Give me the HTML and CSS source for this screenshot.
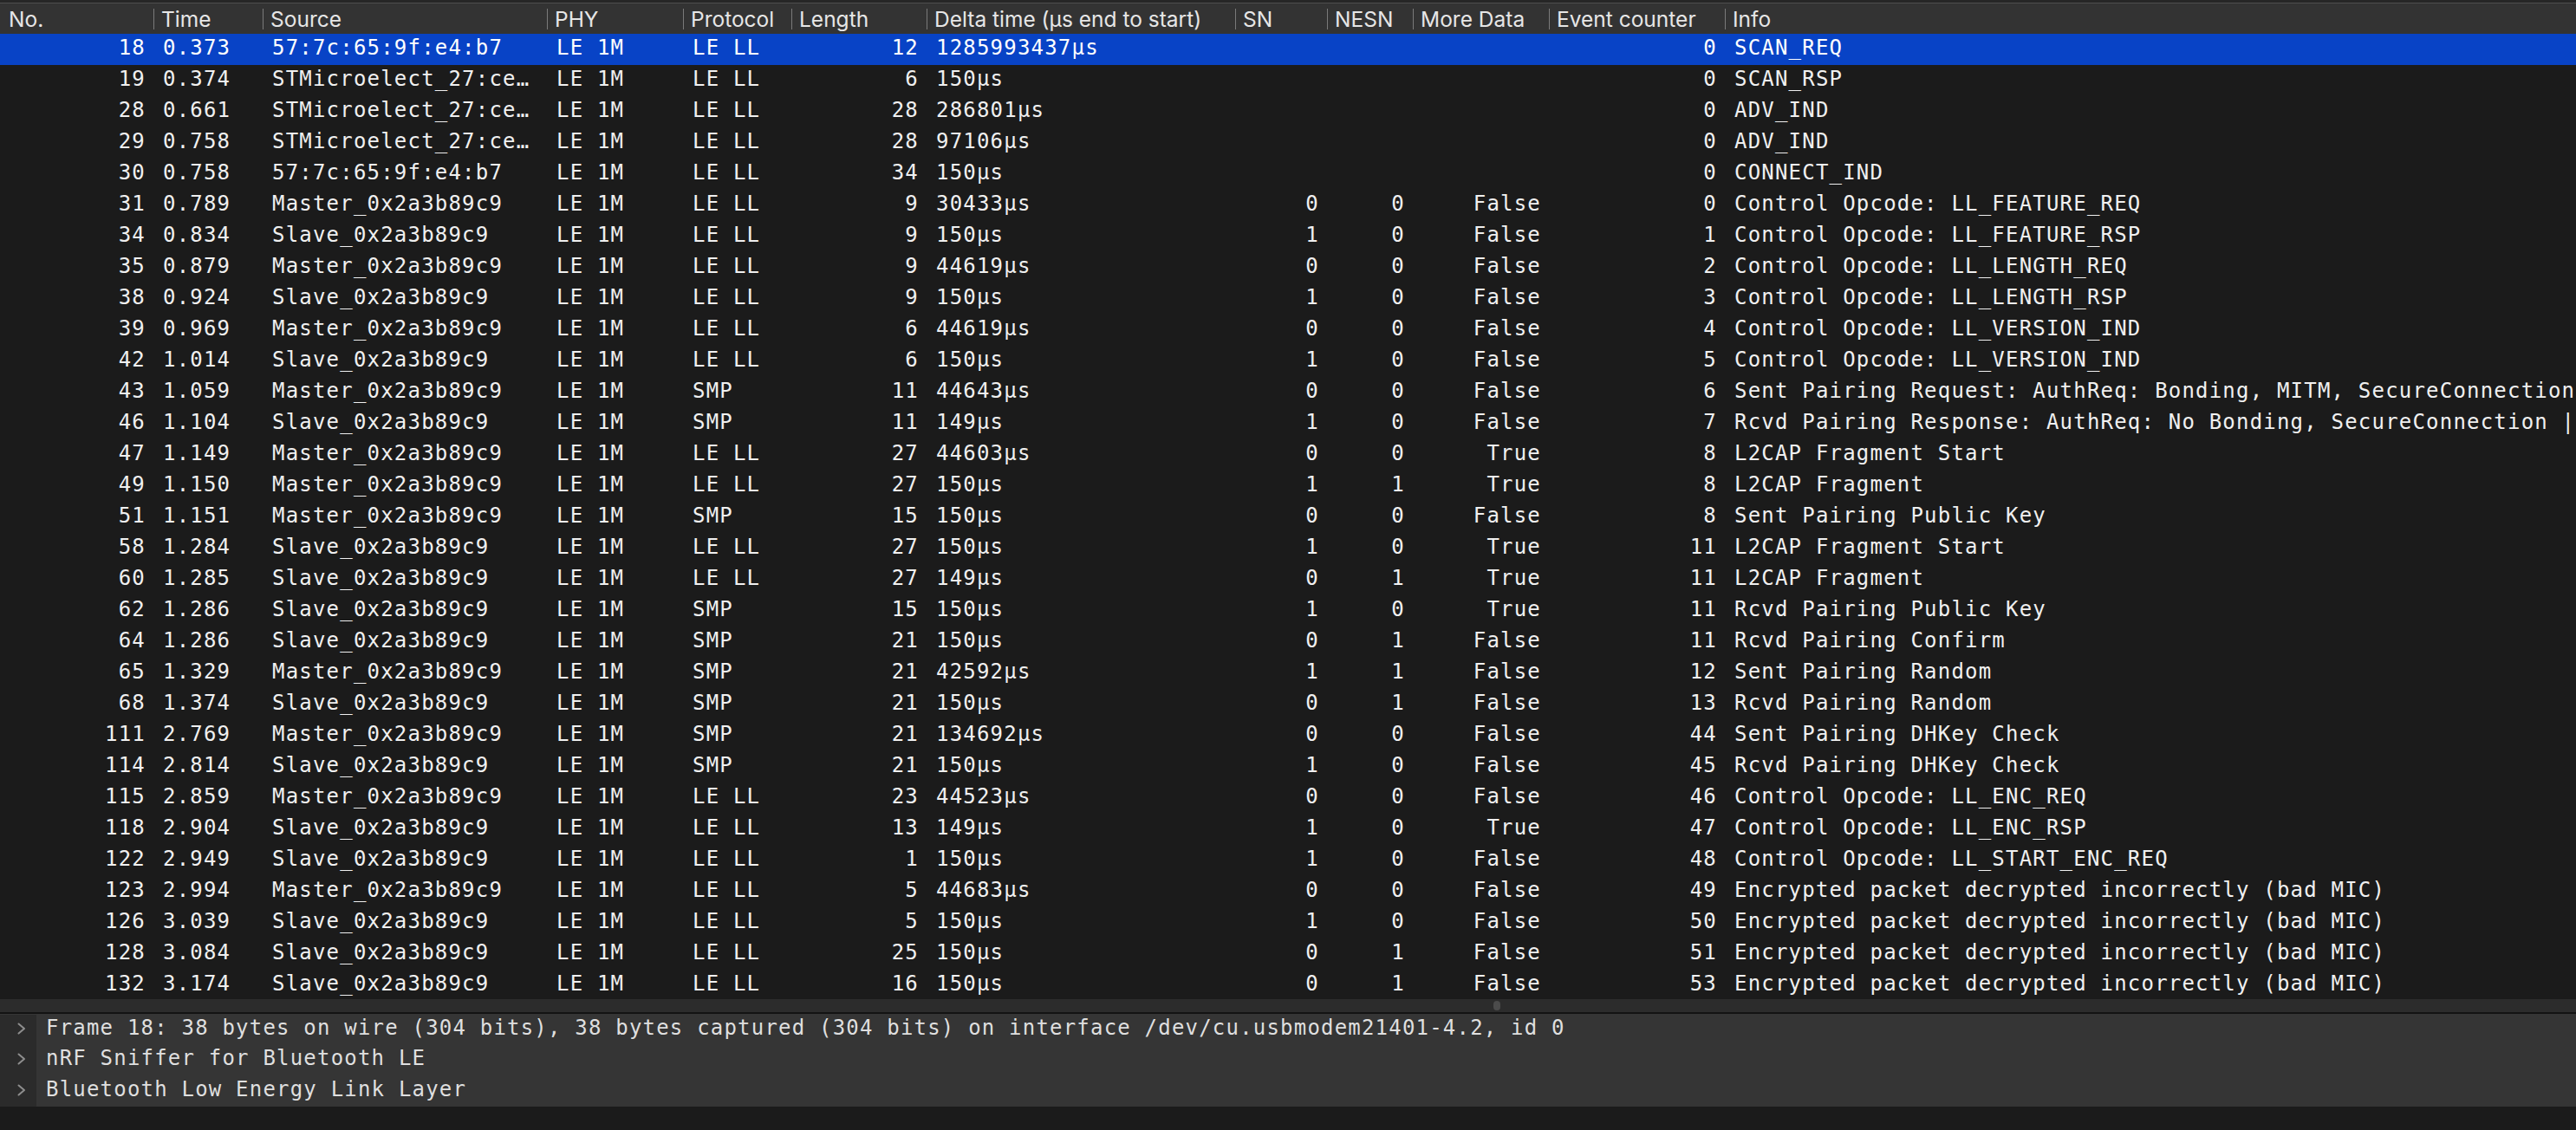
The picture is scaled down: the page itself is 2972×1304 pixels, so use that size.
FILE: index.html
```html
<!DOCTYPE html>
<html>
<head>
<meta charset="utf-8">
<title>Packet list</title>
<link rel="stylesheet" href="styles.css">
</head>
<body>
<div class="app">
  <div class="topstrip"></div>
  <div class="list">
    <div class="hdr">
      <div class="hc first"><span class="hl">No.</span></div>
      <div class="hc"><span class="hl">Time</span></div>
      <div class="hc"><span class="hl">Source</span></div>
      <div class="hc"><span class="hl">PHY</span></div>
      <div class="hc"><span class="hl">Protocol</span></div>
      <div class="hc"><span class="hl">Length</span></div>
      <div class="hc"><span class="hl">Delta time (µs end to start)</span></div>
      <div class="hc"><span class="hl">SN</span></div>
      <div class="hc"><span class="hl">NESN</span></div>
      <div class="hc"><span class="hl">More Data</span></div>
      <div class="hc"><span class="hl">Event counter</span></div>
      <div class="hc"><span class="hl">Info</span></div>
    </div>
    <div class="rows">
      <div class="row sel"><div class="c r">18</div><div class="c">0.373</div><div class="c">57:7c:65:9f:e4:b7</div><div class="c">LE 1M</div><div class="c">LE LL</div><div class="c r">12</div><div class="c">1285993437µs</div><div class="c r"></div><div class="c r"></div><div class="c r"></div><div class="c r">0</div><div class="c info">SCAN_REQ</div></div>
      <div class="row"><div class="c r">19</div><div class="c">0.374</div><div class="c">STMicroelect_27:ce…</div><div class="c">LE 1M</div><div class="c">LE LL</div><div class="c r">6</div><div class="c">150µs</div><div class="c r"></div><div class="c r"></div><div class="c r"></div><div class="c r">0</div><div class="c info">SCAN_RSP</div></div>
      <div class="row"><div class="c r">28</div><div class="c">0.661</div><div class="c">STMicroelect_27:ce…</div><div class="c">LE 1M</div><div class="c">LE LL</div><div class="c r">28</div><div class="c">286801µs</div><div class="c r"></div><div class="c r"></div><div class="c r"></div><div class="c r">0</div><div class="c info">ADV_IND</div></div>
      <div class="row"><div class="c r">29</div><div class="c">0.758</div><div class="c">STMicroelect_27:ce…</div><div class="c">LE 1M</div><div class="c">LE LL</div><div class="c r">28</div><div class="c">97106µs</div><div class="c r"></div><div class="c r"></div><div class="c r"></div><div class="c r">0</div><div class="c info">ADV_IND</div></div>
      <div class="row"><div class="c r">30</div><div class="c">0.758</div><div class="c">57:7c:65:9f:e4:b7</div><div class="c">LE 1M</div><div class="c">LE LL</div><div class="c r">34</div><div class="c">150µs</div><div class="c r"></div><div class="c r"></div><div class="c r"></div><div class="c r">0</div><div class="c info">CONNECT_IND</div></div>
      <div class="row"><div class="c r">31</div><div class="c">0.789</div><div class="c">Master_0x2a3b89c9</div><div class="c">LE 1M</div><div class="c">LE LL</div><div class="c r">9</div><div class="c">30433µs</div><div class="c r">0</div><div class="c r">0</div><div class="c r">False</div><div class="c r">0</div><div class="c info">Control Opcode: LL_FEATURE_REQ</div></div>
      <div class="row"><div class="c r">34</div><div class="c">0.834</div><div class="c">Slave_0x2a3b89c9</div><div class="c">LE 1M</div><div class="c">LE LL</div><div class="c r">9</div><div class="c">150µs</div><div class="c r">1</div><div class="c r">0</div><div class="c r">False</div><div class="c r">1</div><div class="c info">Control Opcode: LL_FEATURE_RSP</div></div>
      <div class="row"><div class="c r">35</div><div class="c">0.879</div><div class="c">Master_0x2a3b89c9</div><div class="c">LE 1M</div><div class="c">LE LL</div><div class="c r">9</div><div class="c">44619µs</div><div class="c r">0</div><div class="c r">0</div><div class="c r">False</div><div class="c r">2</div><div class="c info">Control Opcode: LL_LENGTH_REQ</div></div>
      <div class="row"><div class="c r">38</div><div class="c">0.924</div><div class="c">Slave_0x2a3b89c9</div><div class="c">LE 1M</div><div class="c">LE LL</div><div class="c r">9</div><div class="c">150µs</div><div class="c r">1</div><div class="c r">0</div><div class="c r">False</div><div class="c r">3</div><div class="c info">Control Opcode: LL_LENGTH_RSP</div></div>
      <div class="row"><div class="c r">39</div><div class="c">0.969</div><div class="c">Master_0x2a3b89c9</div><div class="c">LE 1M</div><div class="c">LE LL</div><div class="c r">6</div><div class="c">44619µs</div><div class="c r">0</div><div class="c r">0</div><div class="c r">False</div><div class="c r">4</div><div class="c info">Control Opcode: LL_VERSION_IND</div></div>
      <div class="row"><div class="c r">42</div><div class="c">1.014</div><div class="c">Slave_0x2a3b89c9</div><div class="c">LE 1M</div><div class="c">LE LL</div><div class="c r">6</div><div class="c">150µs</div><div class="c r">1</div><div class="c r">0</div><div class="c r">False</div><div class="c r">5</div><div class="c info">Control Opcode: LL_VERSION_IND</div></div>
      <div class="row"><div class="c r">43</div><div class="c">1.059</div><div class="c">Master_0x2a3b89c9</div><div class="c">LE 1M</div><div class="c">SMP</div><div class="c r">11</div><div class="c">44643µs</div><div class="c r">0</div><div class="c r">0</div><div class="c r">False</div><div class="c r">6</div><div class="c info">Sent Pairing Request: AuthReq: Bonding, MITM, SecureConnection, CT2, Io Capability: Display Yes/No</div></div>
      <div class="row"><div class="c r">46</div><div class="c">1.104</div><div class="c">Slave_0x2a3b89c9</div><div class="c">LE 1M</div><div class="c">SMP</div><div class="c r">11</div><div class="c">149µs</div><div class="c r">1</div><div class="c r">0</div><div class="c r">False</div><div class="c r">7</div><div class="c info">Rcvd Pairing Response: AuthReq: No Bonding, SecureConnection | CT2, Io Capability: Display Yes/No</div></div>
      <div class="row"><div class="c r">47</div><div class="c">1.149</div><div class="c">Master_0x2a3b89c9</div><div class="c">LE 1M</div><div class="c">LE LL</div><div class="c r">27</div><div class="c">44603µs</div><div class="c r">0</div><div class="c r">0</div><div class="c r">True</div><div class="c r">8</div><div class="c info">L2CAP Fragment Start</div></div>
      <div class="row"><div class="c r">49</div><div class="c">1.150</div><div class="c">Master_0x2a3b89c9</div><div class="c">LE 1M</div><div class="c">LE LL</div><div class="c r">27</div><div class="c">150µs</div><div class="c r">1</div><div class="c r">1</div><div class="c r">True</div><div class="c r">8</div><div class="c info">L2CAP Fragment</div></div>
      <div class="row"><div class="c r">51</div><div class="c">1.151</div><div class="c">Master_0x2a3b89c9</div><div class="c">LE 1M</div><div class="c">SMP</div><div class="c r">15</div><div class="c">150µs</div><div class="c r">0</div><div class="c r">0</div><div class="c r">False</div><div class="c r">8</div><div class="c info">Sent Pairing Public Key</div></div>
      <div class="row"><div class="c r">58</div><div class="c">1.284</div><div class="c">Slave_0x2a3b89c9</div><div class="c">LE 1M</div><div class="c">LE LL</div><div class="c r">27</div><div class="c">150µs</div><div class="c r">1</div><div class="c r">0</div><div class="c r">True</div><div class="c r">11</div><div class="c info">L2CAP Fragment Start</div></div>
      <div class="row"><div class="c r">60</div><div class="c">1.285</div><div class="c">Slave_0x2a3b89c9</div><div class="c">LE 1M</div><div class="c">LE LL</div><div class="c r">27</div><div class="c">149µs</div><div class="c r">0</div><div class="c r">1</div><div class="c r">True</div><div class="c r">11</div><div class="c info">L2CAP Fragment</div></div>
      <div class="row"><div class="c r">62</div><div class="c">1.286</div><div class="c">Slave_0x2a3b89c9</div><div class="c">LE 1M</div><div class="c">SMP</div><div class="c r">15</div><div class="c">150µs</div><div class="c r">1</div><div class="c r">0</div><div class="c r">True</div><div class="c r">11</div><div class="c info">Rcvd Pairing Public Key</div></div>
      <div class="row"><div class="c r">64</div><div class="c">1.286</div><div class="c">Slave_0x2a3b89c9</div><div class="c">LE 1M</div><div class="c">SMP</div><div class="c r">21</div><div class="c">150µs</div><div class="c r">0</div><div class="c r">1</div><div class="c r">False</div><div class="c r">11</div><div class="c info">Rcvd Pairing Confirm</div></div>
      <div class="row"><div class="c r">65</div><div class="c">1.329</div><div class="c">Master_0x2a3b89c9</div><div class="c">LE 1M</div><div class="c">SMP</div><div class="c r">21</div><div class="c">42592µs</div><div class="c r">1</div><div class="c r">1</div><div class="c r">False</div><div class="c r">12</div><div class="c info">Sent Pairing Random</div></div>
      <div class="row"><div class="c r">68</div><div class="c">1.374</div><div class="c">Slave_0x2a3b89c9</div><div class="c">LE 1M</div><div class="c">SMP</div><div class="c r">21</div><div class="c">150µs</div><div class="c r">0</div><div class="c r">1</div><div class="c r">False</div><div class="c r">13</div><div class="c info">Rcvd Pairing Random</div></div>
      <div class="row"><div class="c r">111</div><div class="c">2.769</div><div class="c">Master_0x2a3b89c9</div><div class="c">LE 1M</div><div class="c">SMP</div><div class="c r">21</div><div class="c">134692µs</div><div class="c r">0</div><div class="c r">0</div><div class="c r">False</div><div class="c r">44</div><div class="c info">Sent Pairing DHKey Check</div></div>
      <div class="row"><div class="c r">114</div><div class="c">2.814</div><div class="c">Slave_0x2a3b89c9</div><div class="c">LE 1M</div><div class="c">SMP</div><div class="c r">21</div><div class="c">150µs</div><div class="c r">1</div><div class="c r">0</div><div class="c r">False</div><div class="c r">45</div><div class="c info">Rcvd Pairing DHKey Check</div></div>
      <div class="row"><div class="c r">115</div><div class="c">2.859</div><div class="c">Master_0x2a3b89c9</div><div class="c">LE 1M</div><div class="c">LE LL</div><div class="c r">23</div><div class="c">44523µs</div><div class="c r">0</div><div class="c r">0</div><div class="c r">False</div><div class="c r">46</div><div class="c info">Control Opcode: LL_ENC_REQ</div></div>
      <div class="row"><div class="c r">118</div><div class="c">2.904</div><div class="c">Slave_0x2a3b89c9</div><div class="c">LE 1M</div><div class="c">LE LL</div><div class="c r">13</div><div class="c">149µs</div><div class="c r">1</div><div class="c r">0</div><div class="c r">True</div><div class="c r">47</div><div class="c info">Control Opcode: LL_ENC_RSP</div></div>
      <div class="row"><div class="c r">122</div><div class="c">2.949</div><div class="c">Slave_0x2a3b89c9</div><div class="c">LE 1M</div><div class="c">LE LL</div><div class="c r">1</div><div class="c">150µs</div><div class="c r">1</div><div class="c r">0</div><div class="c r">False</div><div class="c r">48</div><div class="c info">Control Opcode: LL_START_ENC_REQ</div></div>
      <div class="row"><div class="c r">123</div><div class="c">2.994</div><div class="c">Master_0x2a3b89c9</div><div class="c">LE 1M</div><div class="c">LE LL</div><div class="c r">5</div><div class="c">44683µs</div><div class="c r">0</div><div class="c r">0</div><div class="c r">False</div><div class="c r">49</div><div class="c info">Encrypted packet decrypted incorrectly (bad MIC)</div></div>
      <div class="row"><div class="c r">126</div><div class="c">3.039</div><div class="c">Slave_0x2a3b89c9</div><div class="c">LE 1M</div><div class="c">LE LL</div><div class="c r">5</div><div class="c">150µs</div><div class="c r">1</div><div class="c r">0</div><div class="c r">False</div><div class="c r">50</div><div class="c info">Encrypted packet decrypted incorrectly (bad MIC)</div></div>
      <div class="row"><div class="c r">128</div><div class="c">3.084</div><div class="c">Slave_0x2a3b89c9</div><div class="c">LE 1M</div><div class="c">LE LL</div><div class="c r">25</div><div class="c">150µs</div><div class="c r">0</div><div class="c r">1</div><div class="c r">False</div><div class="c r">51</div><div class="c info">Encrypted packet decrypted incorrectly (bad MIC)</div></div>
      <div class="row"><div class="c r">132</div><div class="c">3.174</div><div class="c">Slave_0x2a3b89c9</div><div class="c">LE 1M</div><div class="c">LE LL</div><div class="c r">16</div><div class="c">150µs</div><div class="c r">0</div><div class="c r">1</div><div class="c r">False</div><div class="c r">53</div><div class="c info">Encrypted packet decrypted incorrectly (bad MIC)</div></div>
    </div>
  </div>
  <div class="hscroll"><span class="knob" style="margin-left:1723px"></span></div>
  <div class="divider"></div>
  <div class="detail">
    <div class="tline"><div class="chev"><svg width="10" height="14" viewBox="0 0 10 14"><polyline points="1.5,1.5 8,7 1.5,12.5" fill="none" stroke="#8e8e8e" stroke-width="2" stroke-linecap="round" stroke-linejoin="round"/></svg></div><div class="ttext">Frame 18: 38 bytes on wire (304 bits), 38 bytes captured (304 bits) on interface /dev/cu.usbmodem21401-4.2, id 0</div></div>
    <div class="tline"><div class="chev"><svg width="10" height="14" viewBox="0 0 10 14"><polyline points="1.5,1.5 8,7 1.5,12.5" fill="none" stroke="#8e8e8e" stroke-width="2" stroke-linecap="round" stroke-linejoin="round"/></svg></div><div class="ttext">nRF Sniffer for Bluetooth LE</div></div>
    <div class="tline"><div class="chev"><svg width="10" height="14" viewBox="0 0 10 14"><polyline points="1.5,1.5 8,7 1.5,12.5" fill="none" stroke="#8e8e8e" stroke-width="2" stroke-linecap="round" stroke-linejoin="round"/></svg></div><div class="ttext">Bluetooth Low Energy Link Layer</div></div>
  </div>
  <div class="footer"></div>
</div>
</body>
</html>
```

FILE: styles.css
```css
html, body {
  margin: 0;
  padding: 0;
  background: #1b1b1b;
  overflow: hidden;
}

.app {
  width: 2972px;
  height: 1304px;
  display: flex;
  flex-direction: column;
  overflow: hidden;
}

.topstrip {
  height: 3px;
  background: #262626;
  border-bottom: 1px solid #4e4e4e;
  flex: none;
}

.list {
  flex: none;
  display: flex;
  flex-direction: column;
}

.hdr {
  height: 35px;
  background: #333333;
  display: grid;
  grid-template-columns: 177px 126px 328px 157px 125px 156px 356px 106px 99px 157px 203px 1fr;
  align-items: center;
  font-family: "Inter", "Liberation Sans", sans-serif;
  font-size: 24.5px;
  color: #e6e6e6;
}

.hc {
  height: 24px;
  border-left: 1px solid #7a7a7a;
  padding-left: 8px;
  display: flex;
  align-items: center;
  white-space: nowrap;
}

.hl {
  line-height: 30px;
}

.hc.first {
  border-left: 1px solid transparent;
  padding-left: 9px;
}

.rows {
  height: 1114px;
  overflow: hidden;
  background: #1b1b1b;
}

.row {
  height: 36px;
  line-height: 32px;
  display: grid;
  grid-template-columns: 177px 126px 328px 157px 125px 156px 356px 106px 99px 157px 203px 1fr;
  font-family: "DejaVu Sans Mono", monospace;
  font-size: 24px;
  letter-spacing: 1.2px;
  color: #f0f0f0;
}

.row.sel {
  background: #0843c6;
  color: #ffffff;
}

.c {
  padding: 0 9px 0 11px;
  white-space: nowrap;
  overflow: hidden;
}

.c.r {
  text-align: right;
}

.c.info {
  padding-left: 11px;
  padding-right: 0;
  text-overflow: clip;
}

.hscroll {
  flex: none;
  height: 15px;
  background: #2c2c2c;
  display: flex;
  align-items: center;
}

.knob {
  width: 8px;
  height: 11px;
  border-radius: 4px;
  background: #4b4b4b;
}

.divider {
  flex: none;
  height: 2px;
  background: #131313;
}

.detail {
  flex: none;
  height: 107px;
  padding-top: 1px;
  box-sizing: border-box;
  display: flex;
  flex-direction: column;
  background: #353535;
}

.tline {
  height: 35.3px;
  display: flex;
  align-items: stretch;
}

.chev {
  width: 42px;
  flex: none;
  background: #2b2b2b;
  display: flex;
  align-items: center;
  justify-content: flex-start;
  padding-left: 20px;
  padding-bottom: 3px;
  box-sizing: border-box;
}

.ttext {
  flex: 1;
  padding-left: 11px;
  font-family: "DejaVu Sans Mono", monospace;
  font-size: 24px;
  letter-spacing: 1.2px;
  line-height: 31px;
  color: #dfdfdf;
  white-space: nowrap;
  overflow: hidden;
}

.footer {
  flex: 1;
  background: #1b1b1b;
}
```
